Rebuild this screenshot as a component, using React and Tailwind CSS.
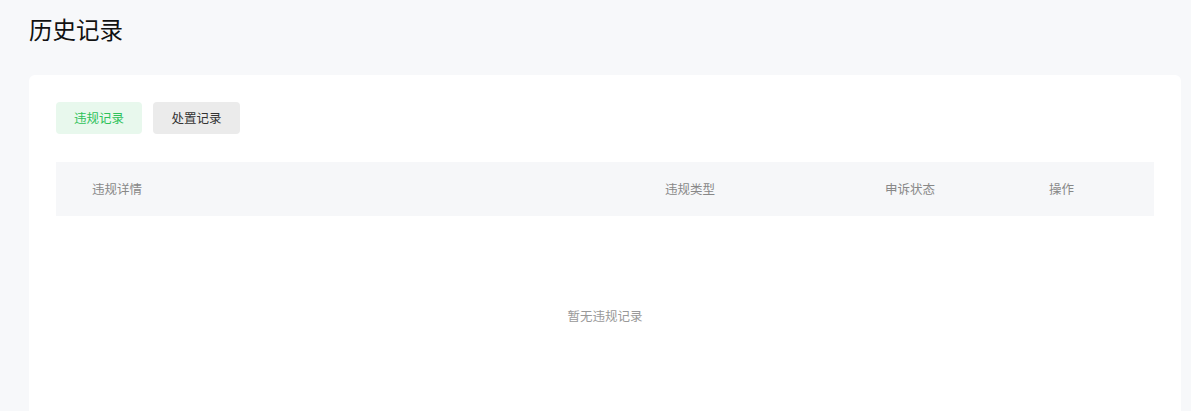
import React, { useState } from 'react';

const tabs = [
  { key: 'violation', label: '违规记录', width: 'w-[86px]' },
  { key: 'handle', label: '处置记录', width: 'w-[87px]' },
];

const columns = ['违规详情', '违规类型', '申诉状态', '操作'];

const App = () => {
  const [active, setActive] = useState('violation');

  return (
    <div
      className="min-h-[411px] bg-[#f7f8fa] px-[29px] pt-[13px]"
      style={{ fontFamily: '"Noto Sans CJK SC", "Noto Sans", sans-serif' }}
    >
      <h1 className="text-[23.5px] leading-8 font-normal text-[#111]">历史记录</h1>

      <div className="mt-[30px] w-[1152px] rounded-md bg-white px-[27px] pt-[27px] pb-10">
        <div className="flex gap-[11px]">
          {tabs.map((t) => (
            <button
              key={t.key}
              onClick={() => setActive(t.key)}
              className={`h-8 ${t.width} rounded text-[12.5px] ${
                active === t.key ? 'bg-[#e8f8ed] text-[#2fc25b]' : 'bg-[#ebebeb] text-[#333]'
              }`}
            >
              {t.label}
            </button>
          ))}
        </div>

        <div className="mt-7 grid h-[54px] grid-cols-[573px_220px_164px_1fr] items-center bg-[#f6f7f9] pl-9 text-[12.5px] text-[#888]">
          {columns.map((c) => (
            <div key={c}>{c}</div>
          ))}
        </div>

        <div className="flex h-[200px] items-center justify-center text-[12.5px] text-[#999]">
          暂无违规记录
        </div>
      </div>
    </div>
  );
};

export default App;
